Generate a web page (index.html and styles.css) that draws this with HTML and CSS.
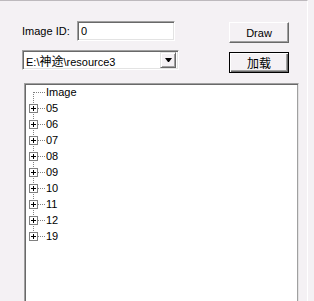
FILE: index.html
```html
<!DOCTYPE html>
<html lang="zh">

<head>
  <meta charset="UTF-8" />
  <title>Image Viewer</title>
  <link rel="stylesheet" href="styles.css">
</head>

<body>
  <div class="dialog">
    <div class="controls">
      <div class="fields">
        <div class="id-row">
          <label class="label" for="image-id">Image ID:</label>
          <div class="edit"><input id="image-id" class="edit-input" value="0" /></div>
        </div>
        <div class="combo">
          <span class="combo-text">E:\<span class="cjk">神途</span>\resource3</span>
          <span class="combo-btn"><span class="arrow"></span></span>
        </div>
      </div>

      <div class="buttons">
        <button class="btn">Draw</button>
        <button class="btn btn-default"><span class="cjk-btn">加载</span></button>
      </div>
    </div>

    <div class="tree">
      <ul class="tree-list">
        <li class="node first"><span class="toggle-gap"></span>Image</li>
        <li class="node"><span class="toggle"></span>05</li>
        <li class="node"><span class="toggle"></span>06</li>
        <li class="node"><span class="toggle"></span>07</li>
        <li class="node"><span class="toggle"></span>08</li>
        <li class="node"><span class="toggle"></span>09</li>
        <li class="node"><span class="toggle"></span>10</li>
        <li class="node"><span class="toggle"></span>11</li>
        <li class="node"><span class="toggle"></span>12</li>
        <li class="node last"><span class="toggle"></span>19</li>
      </ul>
    </div>
  </div>
</body>

</html>
```

FILE: styles.css
```css
body {
  margin: 0;
  background: #f4f1f4;
  font-family: "Liberation Sans", "Noto Sans CJK SC", sans-serif;
  font-size: 11px;
  color: #000;
  overflow: hidden;
}

.dialog {
  width: 308px;
  height: 301px;
  box-sizing: border-box;
  border-top: 1px solid #bdb9bd;
  border-right: 1px solid #fff;
  padding: 20px 0 0 22px;
}

.controls {
  display: flex;
}

.fields {
  width: 157px;
  display: flex;
  flex-direction: column;
  gap: 9px;
}

.id-row {
  display: flex;
  align-items: center;
  height: 20px;
}

.label {
  width: 55px;
}

/* sunken edit box */
.edit,
.combo {
  box-sizing: border-box;
  height: 20px;
  background: #fff;
  border: 1px solid;
  border-color: #a0a0a0 #fff #fff #a0a0a0;
  box-shadow: inset 1px 1px #696969, inset -1px -1px #e3e3e3;
}

.edit {
  width: 98px;
}

.edit-input {
  width: 100%;
  height: 100%;
  box-sizing: border-box;
  border: 0;
  padding: 0 3px;
  background: transparent;
  font: inherit;
  outline: none;
}

.combo {
  display: flex;
  align-items: center;
  justify-content: space-between;
  padding: 2px;
}

.combo-text {
  padding-left: 1px;
}

.cjk {
  font-size: 12px;
}

.combo-btn {
  width: 16px;
  height: 16px;
  box-sizing: border-box;
  display: flex;
  align-items: center;
  justify-content: center;
  background: #f4f1f4;
  border: 1px solid;
  border-color: #e3e3e3 #696969 #696969 #e3e3e3;
  box-shadow: inset 1px 1px #fff, inset -1px -1px #a0a0a0;
}

.arrow {
  width: 1px;
  height: 0;
  border-left: 3px solid transparent;
  border-right: 3px solid transparent;
  border-top: 4px solid #000;
}

.buttons {
  margin-left: 50px;
  padding-top: 1px;
  display: flex;
  flex-direction: column;
  gap: 9px;
}

.btn {
  width: 60px;
  height: 21px;
  box-sizing: border-box;
  padding: 0;
  background: #f4f1f4;
  font: inherit;
  color: #000;
  border: 1px solid;
  border-color: #fff #696969 #696969 #fff;
  box-shadow: inset -1px -1px #a0a0a0;
}

.btn-default {
  border: 1px solid #000;
  box-shadow: inset 1px 1px #fff, inset -1px -1px #696969, inset -2px -2px #a0a0a0;
}

.cjk-btn {
  font-size: 12px;
}

/* tree view */
.tree {
  margin: 10px 0 0 2px;
  width: 275px;
  height: 230px;
  box-sizing: border-box;
  background: #fff;
  border: 1px solid;
  border-color: #a0a0a0 #e3e3e3 #e3e3e3 #a0a0a0;
  box-shadow: inset 1px 1px #696969, inset -1px 0 #a0a0a0;
  padding: 0 1px 1px;
}

.tree-list {
  list-style: none;
  margin: 0;
  padding: 0;
}

.node {
  display: flex;
  align-items: center;
  height: 16px;
  padding-left: 3px;
  background:
    repeating-linear-gradient(to right, #808080 0 1px, transparent 1px 2px) 8px 8px / 11px 1px no-repeat,
    repeating-linear-gradient(to bottom, #808080 0 1px, transparent 1px 2px) 7px 0 / 1px 16px no-repeat;
}

.node.first {
  background:
    repeating-linear-gradient(to right, #808080 0 1px, transparent 1px 2px) 8px 8px / 11px 1px no-repeat,
    repeating-linear-gradient(to bottom, #808080 0 1px, transparent 1px 2px) 7px 8px / 1px 8px no-repeat;
}

.node.last {
  background:
    repeating-linear-gradient(to right, #808080 0 1px, transparent 1px 2px) 8px 8px / 11px 1px no-repeat,
    repeating-linear-gradient(to bottom, #808080 0 1px, transparent 1px 2px) 7px 0 / 1px 9px no-repeat;
}

.toggle,
.toggle-gap {
  width: 9px;
  height: 9px;
  box-sizing: border-box;
  margin-right: 8px;
  flex-shrink: 0;
}

.toggle {
  border: 1px solid #808080;
  background:
    linear-gradient(#000, #000) center / 5px 1px no-repeat,
    linear-gradient(#000, #000) center / 1px 5px no-repeat,
    #fff;
}
```
